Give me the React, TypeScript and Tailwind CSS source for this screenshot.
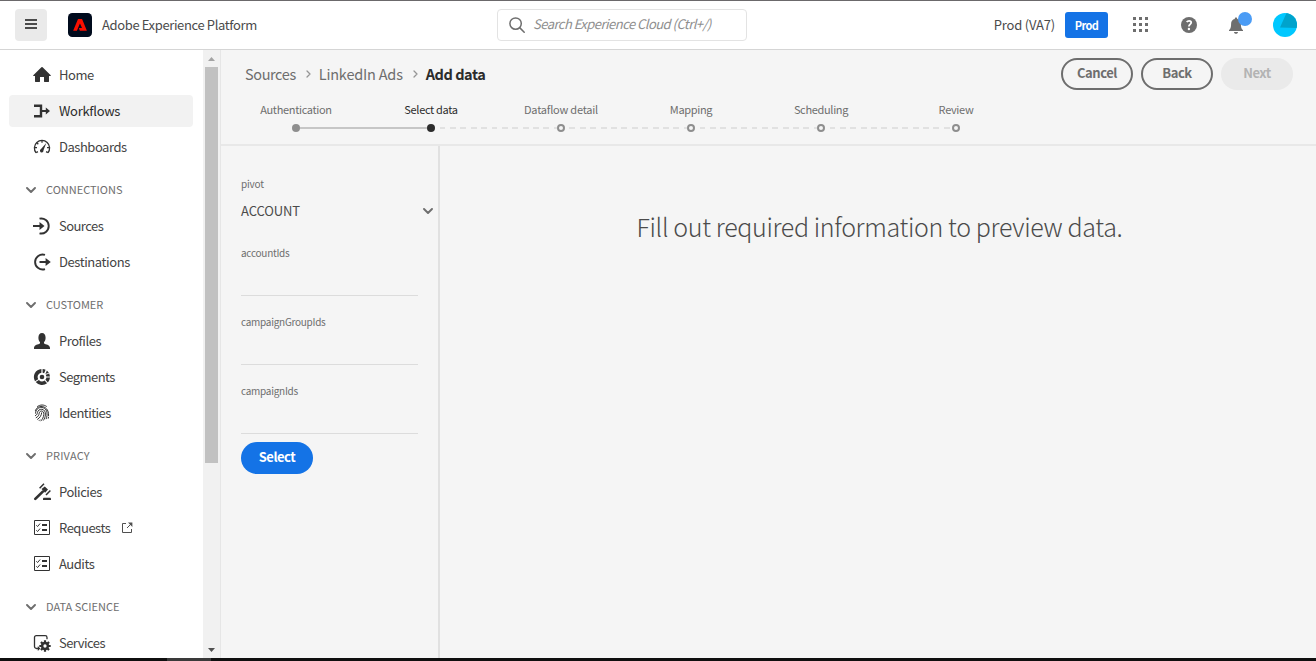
import type { ReactNode } from "react";

const INK = "#323232";

function Icon({ children, size = 18 }: { children: ReactNode; size?: number }) {
  return (
    <svg width={size} height={size} viewBox="0 0 18 18" fill={INK} className="shrink-0">
      {children}
    </svg>
  );
}

const HomeIcon = () => (
  <Icon>
    <path d="M17.7 9.2 9.6 1.3a.8.8 0 0 0-1.2 0L.3 9.2c-.3.4-.1.8.4.8H2v5.5c0 .3.2.5.5.5h4c.3 0 .5-.2.5-.5V11h4v4.500c0 .3.2.5.5.5h4c.3 0 .5-.2.5-.5V10h1.300c.5 0 .7-.4.4-.8z" />
  </Icon>
);

const WorkflowIcon = () => (
  <Icon>
    <path d="M1 2.500h8.200V8h3.600V5.600L17 9l-4.200 3.400V10H9.200v5.500H1V13h5.800V5H1z" />
  </Icon>
);

const DashboardIcon = () => (
  <Icon>
    <path d="M3.100 14.800A7.600 7.600 0 1 1 14.900 14.800" fill="none" stroke={INK} strokeWidth="1.300" />
    <path d="M1.800 9.600h2.200M14 9.600h2.200M3.900 4.800l1.400 1.400M9 2.600v2.200M3.200 14.600l1.700-1M14.800 14.600l-1.700-1" fill="none" stroke={INK} strokeWidth="1.300" />
    <path d="M13.300 5 8 11a1.800 1.800 0 1 0 2.500 1.300z" />
  </Icon>
);

const SourcesIcon = () => (
  <Icon>
    <path d="M6.500 1.700a7.500 7.500 0 1 1 0 14.600" fill="none" stroke={INK} strokeWidth="1.900" />
    <path d="M0 8.100h6.500V5L11.500 9l-5 4V9.900H0z" />
  </Icon>
);

const DestinationsIcon = () => (
  <Icon>
    <path d="M12 1.900A7.500 7.500 0 1 0 12 16.100" fill="none" stroke={INK} strokeWidth="1.900" />
    <path d="M6.500 8.100h6.100V5L17.800 9l-5.200 4V9.900H6.500z" />
  </Icon>
);

const ProfileIcon = () => (
  <Icon>
    <path d="M11 11v-.9c.8-.9 1.600-2.300 1.600-4.400C12.600 2.800 11.200 1 9 1S5.400 2.800 5.400 5.700c0 2.100.8 3.500 1.600 4.400v.9c0 .5-.3.8-.8.9C3.700 12.300 1 13.600 1 16v1h16v-1c0-2.400-2.700-3.700-5.200-4.100-.5-.1-.8-.4-.8-.9z" />
  </Icon>
);

const SegmentsIcon = () => (
  <Icon>
    <path d="M8.400 1v3.700a4.400 4.400 0 0 0-3.200 6.500L2 13.200A8.100 8.100 0 0 1 8.400 1z" />
    <path d="M2.700 14.100 5.900 12a4.400 4.400 0 0 0 5.700.6l2.500 2.700a8.100 8.100 0 0 1-11.400-1.200z" />
    <path d="M12.400 11.800a4.400 4.400 0 0 0 1-2.200H17a8.100 8.100 0 0 1-2.100 4.900z" />
    <path d="M9.600 1a8 8 0 0 1 3 .8l-1.500 3.400a4.400 4.400 0 0 0-1.500-.5z" />
    <path d="M13.900 2.600a8 8 0 0 1 3.100 5.800h-3.700a4.400 4.400 0 0 0-1-2.100z" />
    <path d="m11.200 6.900 5.400-2" stroke="#fff" strokeWidth=".9" />
    <circle cx="9" cy="9" r="2.300" />
  </Icon>
);

const FingerprintIcon = () => (
  <Icon>
    <g fill="none" stroke={INK} strokeWidth="1" strokeLinecap="round">
      <path d="M4.500 2.400C7.300.5 10.800.5 13.400 2.300" />
      <path d="M2.400 6.500C4 2.300 8.700 1.400 12 3.500c2.700 1.700 3.800 4.700 3.600 8.200" />
      <path d="M2.500 9.200c.1-3.600 3-6 6.300-5.700 4 .4 5.600 3.800 5.200 8-.1 1.200-.4 2.300-.8 3.300" />
      <path d="M2.400 11.700c1.700-.8 1.800-2.100 2-3.100.5-2.200 2.200-3.500 4.400-3.300 2.600.3 3.900 2.500 3.600 5.600-.2 2.100-.9 3.900-1.900 5.300" />
      <path d="M3.200 13.700C5.400 12.600 5.900 11 6.200 9.200c.3-1.500 1.300-2.300 2.500-2.200 1.500.2 2.300 1.500 2.100 3.500-.3 2.700-1.300 4.800-2.900 6.400" />
      <path d="M4.600 15.300c2.500-1.600 3.700-3.700 4.100-6.500M6.200 16.500l.6-.6M15.300 14.200l.2-1" />
    </g>
  </Icon>
);

const GavelIcon = () => (
  <Icon>
    <path d="M2.300 15.900 9.800 8.600" fill="none" stroke={INK} strokeWidth="2.700" strokeLinecap="round" />
    <path d="m8.500 6.100 3.300-2.700 3.200 3.200-2.900 3.200z" />
    <path d="M6.600 5.300 11 .7M13 12l4.400-4.600" fill="none" stroke={INK} strokeWidth="1.500" />
    <path d="M10 17v-.9c0-.9.500-1.400 1.200-1.400h5.600c.7 0 1.200.5 1.200 1.400v.9z" />
  </Icon>
);

const ChecklistIcon = () => (
  <Icon>
    <path d="M1.500 1.500h15v14h-15z" fill="none" stroke={INK} strokeWidth="1" />
    <path d="M9 5h5v2H9zM9 10h5v2H9z" />
    <path d="m3.300 6.300 1.300 1.200 2.500-3M3.300 11.300l1.300 1.200 2.500-3" fill="none" stroke={INK} strokeWidth="1" />
  </Icon>
);

const ServicesIcon = () => (
  <Icon>
    <path d="M5.500 14.500h-2a2 2 0 0 1-2-2V3.500A1.800 1.800 0 0 1 3.300 1.600h8.900A1.800 1.800 0 0 1 14 3.400v1.800" fill="none" stroke={INK} strokeWidth="1.300" />
    <path d="M4.800 12 7.300 14.500l-2.500 2.400z" />
    <circle cx="12" cy="12" r="2.900" fill="none" stroke={INK} strokeWidth="2.500" />
    <path
      d="M12 6.300v2M12 15.700v2M6.300 12h2M15.700 12h2M7.970 7.970l1.400 1.400M14.630 14.630l1.400 1.400M7.970 16.030l1.400-1.400M14.630 9.370l1.400-1.400"
      stroke={INK}
      strokeWidth="2.200"
    />
  </Icon>
);

const Chevron = () => (
  <svg width="10" height="6" viewBox="0 0 10 6" fill="none" stroke="#6e6e6e" strokeWidth="1.900" strokeLinecap="round" strokeLinejoin="round" className="shrink-0">
    <path d="M1 1l4 4 4-4" />
  </svg>
);

const OpenIn = () => (
  <svg width="12" height="12" viewBox="0 0 12 12" fill="none" stroke="#505050" strokeWidth="1" className="ml-[11px]">
    <path d="M5 1.500H1.500v9h9V7M6 6l4-4" />
    <path d="M7 .6h4.400V5z" fill="#505050" stroke="none" />
  </svg>
);

function Item({ icon, label, active, tight = "tracking-[-0.47px]", external }: { icon: ReactNode; label: string; active?: boolean; tight?: string; external?: boolean }) {
  return (
    <a className={`flex h-8 shrink-0 items-center rounded pl-6 text-[13px] ${active ? "bg-[#f2f2f2] text-[#2c2c2c]" : "text-[#444]"}`}>
      {icon}
      <span className={`ml-2 ${tight}`}>{label}</span>
      {external && <OpenIn />}
    </a>
  );
}

function Section({ label, tight = "" }: { label: string; tight?: string }) {
  return (
    <div className="mt-[7px] flex h-8 shrink-0 items-center pl-[17px] text-[11px] text-[#6e6e6e]">
      <Chevron />
      <span className={`ml-[10px] pb-0.5 ${tight}`}>{label}</span>
    </div>
  );
}

function Sidebar() {
  return (
    <aside className="flex w-[221px] shrink-0 border-r border-[#e6e6e6] bg-[#fafafa]">
      <nav className="flex w-[203px] flex-col gap-1 overflow-hidden bg-white pl-[9px] pr-[10px] pt-[9px]">
        <Item icon={<HomeIcon />} label="Home" />
        <Item icon={<WorkflowIcon />} label="Workflows" active tight="tracking-[-0.3px]" />
        <Item icon={<DashboardIcon />} label="Dashboards" />
        <Section label="CONNECTIONS" />
        <Item icon={<SourcesIcon />} label="Sources" tight="tracking-[-0.55px]" />
        <Item icon={<DestinationsIcon />} label="Destinations" tight="tracking-[-0.42px]" />
        <Section label="CUSTOMER" tight="tracking-[-0.1px]" />
        <Item icon={<ProfileIcon />} label="Profiles" />
        <Item icon={<SegmentsIcon />} label="Segments" tight="tracking-[-0.55px]" />
        <Item icon={<FingerprintIcon />} label="Identities" tight="tracking-[-0.55px]" />
        <Section label="PRIVACY" tight="tracking-[0.15px]" />
        <Item icon={<GavelIcon />} label="Policies" />
        <Item icon={<ChecklistIcon />} label="Requests" external />
        <Item icon={<ChecklistIcon />} label="Audits" />
        <Section label="DATA SCIENCE" />
        <Item icon={<ServicesIcon />} label="Services" tight="tracking-[-0.55px]" />
      </nav>
      <div className="flex w-[17px] flex-col items-center bg-[#f1f1f1]">
        <svg width="7" height="4" viewBox="0 0 7 4" className="mt-[7px] shrink-0"><path d="M3.500 0 7 4H0z" fill="#a3a3a3" /></svg>
        <div className="mt-[6px] h-[396px] w-[13px] bg-[#c1c1c1]" />
        <svg width="7" height="4" viewBox="0 0 7 4" className="mb-[6px] mt-auto shrink-0"><path d="M0 0h7L3.500 4z" fill="#505050" /></svg>
      </div>
    </aside>
  );
}

function Header() {
  return (
    <header className="flex h-[50px] shrink-0 items-center border-b border-t border-b-[#d5d5d5] border-t-[#6b696b] bg-white text-[13px] text-[#4b4b4b]">
      <button className="ml-[15px] flex h-8 w-8 items-center justify-center rounded bg-[#eaeaea]">
        <svg width="12" height="10" viewBox="0 0 12 10" fill="#4b4b4b" className="-mt-0.5"><path d="M0 0h12v2H0zM0 4h12v2H0zM0 8h12v2H0z" /></svg>
      </button>
      <svg width="24" height="24" viewBox="0 0 24 24" className="ml-[21px]">
        <rect width="24" height="24" rx="4.250" fill="#000b1d" />
        <path fill="#fa0f00" d="M14.270 17.850H18.550Q18.950 17.850 18.790 17.480L14.170 6.340Q14.040 6 13.700 6H10.320Q10.020 6 9.900 6.300L5.270 17.480Q5.140 17.850 5.520 17.850H8.550Q8.880 17.850 9.010 17.540L11.830 10.650Q11.970 10.380 12.090 10.650L13.900 14.850Q13.980 15.080 13.750 15.080H11.200Q10.850 15.080 10.850 15.350L11.760 17.540Q11.900 17.850 12.250 17.850Z" />
      </svg>
      <span className="ml-[10px] w-[395px] tracking-[-0.37px]">Adobe Experience Platform</span>
      <div className="flex h-8 w-[250px] shrink-0 items-center rounded border border-[#e3e3e3] pl-[11px] text-[#8e8e8e]">
        <svg width="16" height="16" viewBox="0 0 16 16" fill="none" stroke="#6e6e6e" strokeWidth="1.500" strokeLinecap="round">
          <circle cx="6.600" cy="6.600" r="5.700" /><path d="m10.900 10.900 4.300 4.300" />
        </svg>
        <span className="ml-[8px] whitespace-nowrap pb-0.5 italic tracking-[-0.53px]">Search Experience Cloud (Ctrl+/)</span>
      </div>
      <span className="ml-auto tracking-[-0.2px]">Prod (VA7)</span>
      <button className="ml-[10px] h-[26px] w-[43px] rounded-[3px] bg-[#1473e6] text-[11px] font-bold tracking-[-0.6px] text-white">Prod</button>
      <svg width="16" height="16" viewBox="0 0 16 16" fill="#6e6e6e" className="ml-[24px]">
        <path d="M1 0h3v3H1zM7 0h3v3H7zM13 0h3v3h-3zM1 6h3v3H1zM7 6h3v3H7zM13 6h3v3h-3zM1 12h3v3H1zM7 12h3v3H7zM13 12h3v3h-3z" />
      </svg>
      <svg width="16" height="16" viewBox="0 0 16 16" className="ml-[33px]">
        <circle cx="8" cy="8" r="8" fill="#6e6e6e" />
        <path d="M5.700 5c.6-.8 1.400-1.200 2.400-1.200 1.300 0 2.100.7 2.100 1.700 0 1.900-2.300 1.900-2.300 4" fill="none" stroke="#fff" strokeWidth="1.800" />
        <circle cx="7.900" cy="12" r="1.200" fill="#fff" />
      </svg>
      <svg width="26" height="24" viewBox="0 0 26 24" className="-mt-[2px] ml-[31px]">
        <path d="M8 5.500c.8 0 1.200.5 1.200 1.100v.4c2.500.5 3.700 2.300 3.700 4.700 0 4 .8 5.300 2.100 6.300v1H1v-1c1.300-1 2.100-2.300 2.100-6.300 0-2.400 1.200-4.200 3.700-4.700v-.4c0-.6.400-1.100 1.200-1.100zM6 20h4c0 1-.8 1.800-2 1.800S6 21 6 20z" fill="#6e6e6e" />
        <circle cx="17" cy="7" r="7" fill="#4b9cf5" />
      </svg>
      <svg width="24" height="24" viewBox="0 0 24 24" className="ml-[19px] mr-[19px]">
        <clipPath id="avatar"><circle cx="12" cy="12" r="12" /></clipPath>
        <g clipPath="url(#avatar)">
          <path d="M0 0h24v24H0z" fill="#00c8ff" />
          <path d="M13.500 0H24v15L7 14.500z" fill="#00a3cc" />
        </g>
      </svg>
    </header>
  );
}

const Sep = () => (
  <svg width="5" height="8" viewBox="0 0 5 8" fill="none" stroke="#959595" strokeWidth="1.300" strokeLinecap="round" strokeLinejoin="round">
    <path d="M1 1l3 3-3 3" />
  </svg>
);

const DASHED = "bg-[repeating-linear-gradient(90deg,transparent_0_4.5px,#e1e1e1_4.5px_10.4px)]";

const steps = [
  { label: "Authentication", width: "w-[140px]", track: "" },
  { label: "Select data", width: "w-[130px]", track: "w-[127px] bg-[#c6c6c6]" },
  { label: "Dataflow detail", width: "w-[130px]", track: `w-[122px] ${DASHED}` },
  { label: "Mapping", width: "w-[130px]", track: `w-[122px] ${DASHED}` },
  { label: "Scheduling", width: "w-[130px]", track: `w-[122px] ${DASHED}` },
  { label: "Review", width: "w-[140px]", track: `w-[127px] ${DASHED}` },
];

function Stepper() {
  return (
    <div className="pl-[5px] pt-px text-[11px] tracking-[-0.33px] text-[#6e6e6e]">
      <div className="flex h-5">
        {steps.map((s, i) => (
          <span key={s.label} className={`text-center leading-5 ${s.width} ${i === 1 ? "text-[#2c2c2c]" : ""} ${i === 2 ? "tracking-[-0.22px]" : ""}`}>{s.label}</span>
        ))}
      </div>
      <div className="mt-[5px] flex items-center pl-[66px]">
        {steps.map((s, i) => (
          <div key={s.label} className="flex items-center">
            {i > 0 && <div className={`h-0.5 ${s.track}`} />}
            <div className={`size-2 rounded-full ${i === 0 ? "bg-[#8e8e8e]" : i === 1 ? "bg-[#2c2c2c]" : "border-2 border-[#8e8e8e]"}`} />
          </div>
        ))}
      </div>
    </div>
  );
}

function Field({ label }: { label: string }) {
  return (
    <label className="block h-[69px]">
      <span className="block text-[10px] leading-[18px] tracking-[-0.27px] text-[#6e6e6e]">{label}</span>
      <span className="block h-[34px] w-[177px] border-b border-[#dcdcdc]" />
    </label>
  );
}

export default function App() {
  return (
    <div className="flex h-[661px] w-[1316px] flex-col overflow-hidden bg-[#f5f5f5] font-['Noto_Sans_CJK_SC',sans-serif]">
      <Header />
      <div className="flex h-[608px]">
        <Sidebar />
        <main className="flex grow flex-col">
          <div className="h-24 shrink-0 border-b-2 border-[#e8e8e8]">
            <div className="flex h-[48px] items-center pl-6 pr-[23px]">
              <div className="flex items-center gap-[10px] text-[14.5px] text-[#6e6e6e]">
                <span className="tracking-[-0.4px]">Sources</span>
                <Sep />
                <span className="-ml-[2px] tracking-[-0.2px]">LinkedIn Ads</span>
                <Sep />
                <span className="-ml-[2px] font-bold tracking-[-0.45px] text-[#2c2c2c]">Add data</span>
              </div>
              <div className="ml-auto flex gap-2 text-[13px] font-bold tracking-[-0.45px] text-[#6e6e6e]">
                <button className="h-8 w-[72px] rounded-full border-2 border-[#6e6e6e] pb-[3px]">Cancel</button>
                <button className="h-8 w-[72px] rounded-full border-2 border-[#6e6e6e] pb-[3px]">Back</button>
                <button className="h-8 w-[72px] rounded-full bg-[#eaeaea] pb-[3px] text-[#b3b3b3]">Next</button>
              </div>
            </div>
            <Stepper />
          </div>
          <div className="flex grow">
            <div className="w-[219px] shrink-0 border-r-2 border-[#e1e1e1] pl-5 pt-[29px]">
              <div className="text-[10px] leading-[18px] tracking-[-0.2px] text-[#6e6e6e]">pivot</div>
              <div className="mb-[15px] flex h-[36px] items-center justify-between pr-[5px] text-[13px] tracking-[-0.1px] text-[#4b4b4b]">
                ACCOUNT
                <Chevron />
              </div>
              <Field label="accountIds" />
              <Field label="campaignGroupIds" />
              <Field label="campaignIds" />
              <button className="-mt-[9px] block h-8 w-[72px] rounded-full bg-[#1473e6] pb-[3px] text-[13px] font-bold tracking-[-0.5px] text-white">Select</button>
            </div>
            <div className="grow pl-[3px] pt-[60px] text-center text-[25px] font-light leading-10 tracking-[-0.36px] text-[#4b4b4b]">
              Fill out required information to preview data.
            </div>
          </div>
        </main>
      </div>
      <div className="flex h-[3px] shrink-0 bg-[#0f0f0f] pl-[167px]">
        <div className="w-[44px] bg-[#3a3a3a]" />
      </div>
    </div>
  );
}
